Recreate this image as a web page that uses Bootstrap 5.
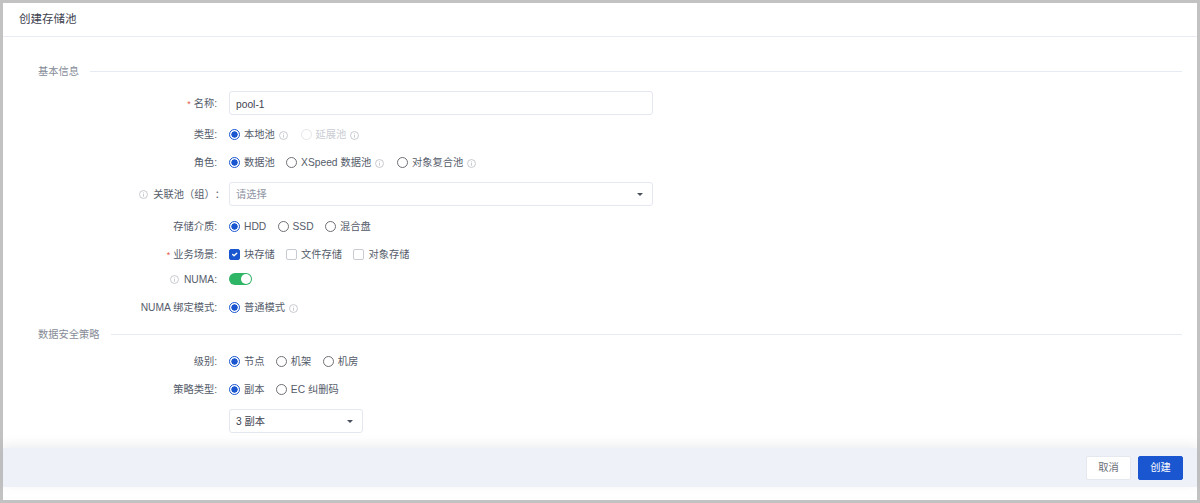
<!DOCTYPE html>
<html lang="zh-CN">
<head>
<meta charset="utf-8">
<title>创建存储池</title>
<link href="https://cdn.jsdelivr.net/npm/bootstrap@5.3.0/dist/css/bootstrap.min.css" rel="stylesheet">
<style>
html,body{height:100%;}
body{font-family:"Liberation Sans","Noto Sans CJK SC",sans-serif;font-size:10.25px;color:#555c6a;background:#fff;overflow:hidden;}
.shell{height:503px;border:3px solid #c2c2c2;}
.head-bar{height:34px;padding-left:16px;border-bottom:1px solid #e9ecf4;font-size:11.5px;color:#3d4250;flex:none;}
.body-area{overflow:hidden;}
.sec-head{height:20px;padding-left:35px;padding-right:15px;color:#868b97;gap:11px;}
.sec-txt{padding-top:2px;}
.sec-line{height:1px;background:#e7eaf2;}
.first-sec{margin-top:24px;}
.sp5{margin-top:5px;}.sp7{margin-top:7px;}.sp8{margin-top:8px;}.sp9{margin-top:9px;}.sp10{margin-top:10px;}
.frow{height:20px;}
.frow-tall{height:24px;}
.lbl{width:214px;text-align:right;color:#555c6a;flex:none;margin-right:12px;white-space:nowrap;padding-top:2px;}
.req{color:#e25b45;margin-right:3px;font-size:9px;}
.over-colon{margin-right:-8px;text-spacing-trim:space-all;}
.opts{gap:11.3px;}
.opt{gap:4px;color:#555c6a;white-space:nowrap;padding-top:2px;}
.opt.off{color:#c9ccd3;}
.opt .form-check-input{margin:-2px 0 0;width:11px;height:11px;border:1px solid #6d6f75;background-color:#fff;flex:none;box-shadow:none;}
.opt .form-check-input[type=radio]:checked{border-color:#1a56d0;background-color:#fff;background-image:radial-gradient(circle,#1a56d0 0,#1a56d0 2.9px,#fff 3.4px);background-size:100% 100%;}
.opt .form-check-input[type=radio]:disabled{opacity:1;border-color:#e4e6ea;}
.opt .form-check-input[type=checkbox]{border-color:#c8cbd2;border-radius:2px;}
.opt .form-check-input[type=checkbox]:checked{background-color:#1a56d0;border-color:#1a56d0;}
.ico{width:9px;height:9px;flex:none;margin-right:1.5px;vertical-align:-1px;}
.ico-l{margin-left:0;margin-right:5px;}
.fld{height:24px;border:1px solid #e4e7f0;border-radius:3px;padding:2px 6px 0;font-size:10.25px;color:#3d4250;box-shadow:none;}
.fld-w{width:424px;}
.fld-s{width:134px;}
.ph{color:#8f95a3;}
.caret{width:0;height:0;border-left:3px solid transparent;border-right:3px solid transparent;border-top:3px solid #4a4f5c;margin:-2px 3px 0 0;}
.sw{width:23px;height:12px;border-radius:6px;background:#2fb566;padding:1px;}
.sw-knob{width:10px;height:10px;border-radius:50%;background:#fff;}
.foot-wrap{flex:none;}
.foot-bar{height:39px;background:#eef1f8;padding-right:14px;gap:7px;box-shadow:0 -3px 10px rgba(120,125,140,.14);position:relative;}
.foot-gap{height:13px;background:#fff;}
.bt{height:24px;font-size:10.25px;padding:1px 0 0;border-radius:2px;}
.bt-cancel{width:45px;background:#fff;border:1px solid #e6e8ef;color:#6b6f79;}
.bt-ok{width:45px;background:#1a56d0;border:1px solid #1a56d0;color:#fff;}
</style>
</head>
<body>
<svg width="0" height="0" class="d-block position-absolute">
<symbol id="info" viewBox="0 0 10 10"><circle cx="5" cy="5" r="4.4" fill="none" stroke="#b4b7bf" stroke-width=".8"/><rect x="4.6" y="4.2" width=".8" height="3.2" fill="#b4b7bf"/><rect x="4.6" y="2.6" width=".8" height=".9" fill="#b4b7bf"/></symbol>
</svg>
<div class="shell d-flex flex-column">
  <div class="head-bar d-flex align-items-center">创建存储池</div>
  <div class="body-area flex-grow-1">
    <div class="sec-head first-sec d-flex align-items-center"><span class="sec-txt">基本信息</span><div class="sec-line flex-grow-1"></div></div>
    <div class="frow-tall d-flex align-items-center sp10">
      <div class="lbl"><span class="req">*</span>名称:</div>
      <input class="form-control fld fld-w" type="text" value="pool-1">
    </div>
    <div class="frow d-flex align-items-center sp9">
      <div class="lbl">类型:</div>
      <div class="d-flex align-items-center opts">
        <label class="opt d-flex align-items-center"><input class="form-check-input" type="radio" name="a" checked>本地池<svg class="ico"><use href="#info"/></svg></label>
        <label class="opt off d-flex align-items-center"><input class="form-check-input" type="radio" name="a" disabled>延展池<svg class="ico"><use href="#info"/></svg></label>
      </div>
    </div>
    <div class="frow d-flex align-items-center sp8">
      <div class="lbl">角色:</div>
      <div class="d-flex align-items-center opts">
        <label class="opt d-flex align-items-center"><input class="form-check-input" type="radio" name="b" checked>数据池</label>
        <label class="opt d-flex align-items-center"><input class="form-check-input" type="radio" name="b">XSpeed 数据池<svg class="ico"><use href="#info"/></svg></label>
        <label class="opt d-flex align-items-center"><input class="form-check-input" type="radio" name="b">对象复合池<svg class="ico"><use href="#info"/></svg></label>
      </div>
    </div>
    <div class="frow-tall d-flex align-items-center sp10">
      <div class="lbl"><span class="over-colon d-inline-block"><svg class="ico ico-l"><use href="#info"/></svg>关联池（组）：</span></div>
      <div class="fld fld-w d-flex align-items-center justify-content-between"><span class="ph">请选择</span><span class="caret"></span></div>
    </div>
    <div class="frow d-flex align-items-center sp10">
      <div class="lbl">存储介质:</div>
      <div class="d-flex align-items-center opts">
        <label class="opt d-flex align-items-center"><input class="form-check-input" type="radio" name="c" checked>HDD</label>
        <label class="opt d-flex align-items-center"><input class="form-check-input" type="radio" name="c">SSD</label>
        <label class="opt d-flex align-items-center"><input class="form-check-input" type="radio" name="c">混合盘</label>
      </div>
    </div>
    <div class="frow d-flex align-items-center sp8">
      <div class="lbl"><span class="req">*</span>业务场景:</div>
      <div class="d-flex align-items-center opts">
        <label class="opt d-flex align-items-center"><input class="form-check-input" type="checkbox" checked>块存储</label>
        <label class="opt d-flex align-items-center"><input class="form-check-input" type="checkbox">文件存储</label>
        <label class="opt d-flex align-items-center"><input class="form-check-input" type="checkbox">对象存储</label>
      </div>
    </div>
    <div class="frow d-flex align-items-center sp5">
      <div class="lbl"><svg class="ico ico-l"><use href="#info"/></svg>NUMA:</div>
      <div class="sw d-flex justify-content-end"><div class="sw-knob"></div></div>
    </div>
    <div class="frow d-flex align-items-center sp8">
      <div class="lbl">NUMA 绑定模式:</div>
      <label class="opt d-flex align-items-center"><input class="form-check-input" type="radio" name="d" checked>普通模式<svg class="ico"><use href="#info"/></svg></label>
    </div>
    <div class="sec-head d-flex align-items-center sp7"><span class="sec-txt">数据安全策略</span><div class="sec-line flex-grow-1"></div></div>
    <div class="frow d-flex align-items-center sp7">
      <div class="lbl">级别:</div>
      <div class="d-flex align-items-center opts">
        <label class="opt d-flex align-items-center"><input class="form-check-input" type="radio" name="e" checked>节点</label>
        <label class="opt d-flex align-items-center"><input class="form-check-input" type="radio" name="e">机架</label>
        <label class="opt d-flex align-items-center"><input class="form-check-input" type="radio" name="e">机房</label>
      </div>
    </div>
    <div class="frow d-flex align-items-center sp8">
      <div class="lbl">策略类型:</div>
      <div class="d-flex align-items-center opts">
        <label class="opt d-flex align-items-center"><input class="form-check-input" type="radio" name="f" checked>副本</label>
        <label class="opt d-flex align-items-center"><input class="form-check-input" type="radio" name="f">EC 纠删码</label>
      </div>
    </div>
    <div class="frow-tall d-flex align-items-center sp10">
      <div class="lbl"></div>
      <div class="fld fld-s d-flex align-items-center justify-content-between"><span>3 副本</span><span class="caret"></span></div>
    </div>
  </div>
  <div class="foot-wrap">
    <div class="foot-bar d-flex align-items-center justify-content-end">
      <button type="button" class="btn bt bt-cancel">取消</button>
      <button type="button" class="btn bt bt-ok">创建</button>
    </div>
    <div class="foot-gap"></div>
  </div>
</div>
</body>
</html>
